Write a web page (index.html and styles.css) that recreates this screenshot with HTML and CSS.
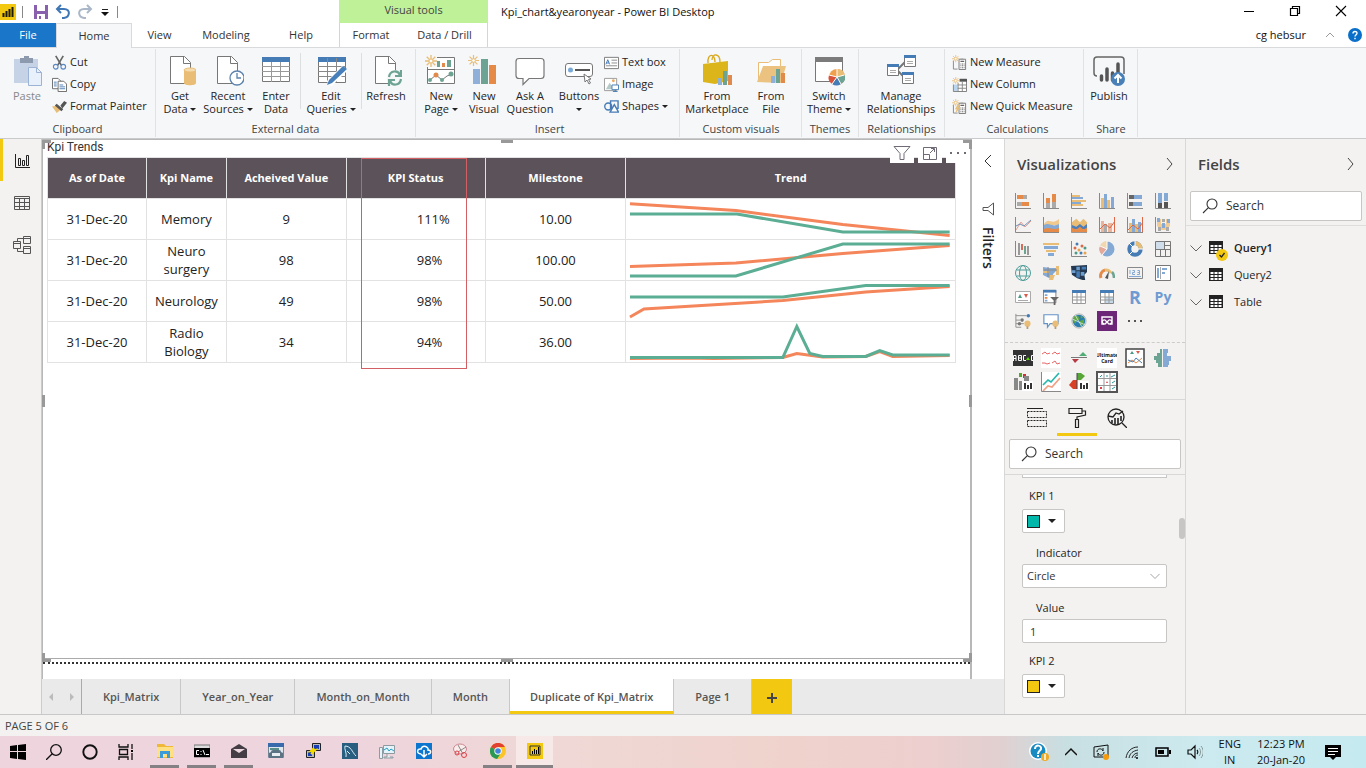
FILE: index.html
```html
<!DOCTYPE html>
<html lang="en">
<head>
<meta charset="utf-8">
<title>Kpi_chart&amp;yearonyear - Power BI Desktop</title>
<meta name="viewport" content="width=device-width, initial-scale=1">
<link rel="stylesheet" href="styles.css">
</head>
<body>
<svg class="defs" aria-hidden="true">
  <symbol id="search" viewBox="0 0 16 16"><g fill="none" stroke="#333" stroke-width="1.1"><circle cx="10" cy="6" r="5"/><path d="M6.4 9.6 1 15"/></g></symbol>
  <symbol id="down" viewBox="0 0 12 12"><path d="M.5 3.500 6 9l5.500-5.500" fill="none" stroke="#666"/></symbol>
  <symbol id="gridtable" viewBox="0 0 14 13"><path d="M0 0h14v13H0z" fill="#222"/><path d="M1.500 4h3v2h-3zM5.500 4h3v2h-3zM9.500 4h3v2h-3zM1.500 7h3v2h-3zM5.500 7h3v2h-3zM9.500 7h3v2h-3zM1.500 10h3v2h-3zM5.500 10h3v2h-3zM9.500 10h3v2h-3z" fill="#fff"/></symbol>
  <symbol id="page" viewBox="0 0 32 32"><path d="M3.500 2.500h14l6 6v21h-20z" fill="#fff" stroke="#777"/><path d="M16.500 2.500v7h7" fill="none" stroke="#777"/></symbol>
  <symbol id="burst" viewBox="0 0 12 12"><path d="M6 0v12M0 6h12M1.700 1.700l8.600 8.600M10.300 1.700l-8.600 8.600" stroke="#e9bd75" stroke-width="1.300"/><circle cx="6" cy="6" r="2" fill="#fff" stroke="#e9bd75"/></symbol>
  <symbol id="minibars" viewBox="0 0 14 14"><path d="M0 7h4v7H0z" fill="#8fb0d8"/><path d="M5 0h4v14H5z" fill="#6da392"/><path d="M10 4h4v10h-4z" fill="#e08a4c"/></symbol>
  <symbol id="calc" viewBox="0 0 16 16"><path d="M1.500 6v9H6M12 4.500H9" fill="none" stroke="#888"/><path d="M7.500 4.500h7v11h-7z" fill="#fff" stroke="#777"/><path d="M9 6h4v1.500H9zM9 9h1v1H9zM10.700 9h1v1h-1zM12.400 9h1v1h-1zM9 11h1v1H9zM10.700 11h1v1h-1zM12.400 11h1v1h-1zM9 13h1v1H9zM10.700 13h1v1h-1zM12.400 13h1v1h-1z" fill="#666"/></symbol>
</svg>

<header class="titlebar">
  <div class="quick">
    <svg class="logo" viewBox="0 0 16 16"><path d="M0 0h16v16H0z" fill="#f2c811"/><path d="M2.500 9h2v4h-2zM5.500 7h2v6h-2zM8.500 5h2v8h-2zM11.500 3h2v10h-2z" fill="#1d1a05"/></svg>
    <i class="bar"></i>
    <button aria-label="Save"><svg class="i16" viewBox="0 0 16 16"><path d="M1 1h14v14H1z" fill="#8960ad"/><path d="M4 1h8v6H4zM4 10h8v5H4z" fill="#fff"/><path d="M6 12h2v3H6z" fill="#8960ad"/></svg></button>
    <button aria-label="Undo"><svg class="i16" viewBox="0 0 16 16"><path d="M6 1 2 5l4 4M2 5h7c7 0 6 8 0 9H7" fill="none" stroke="#3f76b5" stroke-width="2"/></svg></button>
    <button aria-label="Redo"><svg class="i16" viewBox="0 0 16 16"><path d="m10 1 4 4-4 4M14 5H7C0 5 1 13 7 14h2" fill="none" stroke="#aab7c8" stroke-width="2"/></svg></button>
    <button aria-label="Customize"><svg class="i12" viewBox="0 0 12 12"><path d="M3 3.500h6" stroke="#222"/><path d="M2 6h8l-4 4z" fill="#111"/></svg></button>
    <i class="bar"></i>
  </div>
  <div class="tools">Visual tools</div>
  <h1 class="apptitle">Kpi_chart&amp;yearonyear - Power BI Desktop</h1>
  <div class="window">
    <button aria-label="Minimize"><svg class="i12" viewBox="0 0 12 12"><path d="M1 6.500h10" stroke="#000"/></svg></button>
    <button aria-label="Restore"><svg class="i12" viewBox="0 0 12 12"><path d="M1.500 3.500h7v7h-7zM3.500 3.500v-2h7v7h-2" fill="none" stroke="#000" stroke-width="1.200"/></svg></button>
    <button aria-label="Close"><svg class="i12" viewBox="0 0 12 12"><path d="m1 1 10 10M11 1 1 11" stroke="#000" stroke-width="1.100"/></svg></button>
  </div>
</header>

<nav class="menu">
  <button class="file">File</button>
  <button class="home">Home</button>
  <button class="view">View</button>
  <button class="modeling">Modeling</button>
  <button class="help">Help</button>
  <div class="context"><button class="format">Format</button><button class="drill">Data / Drill</button></div>
  <div class="account"><span>cg hebsur</span>
    <svg class="i12" viewBox="0 0 12 12"><path d="m2 8 4-4 4 4" fill="none" stroke="#999"/></svg>
    <svg class="i14" viewBox="0 0 14 14"><circle cx="7" cy="7" r="7" fill="#0a6fc9"/><path d="M5 5.400C5 2.800 9 2.900 9 5.200 9 6.600 7 6.800 7 8.600M7 9.800v1.400" fill="none" stroke="#fff" stroke-width="1.400"/></svg>
  </div>
</nav>

<section class="ribbon" aria-label="Home ribbon">
  <div class="group g-clip">
    <div class="items">
      <button class="big w54 off"><svg viewBox="0 0 32 32"><path d="M3 5h24v24H3z" fill="#c6d2e6"/><path d="M9 4h4V2h5v2h4v5H9z" fill="#8d99ad"/><path d="M17.500 13.500h8l5 5v13h-13z" fill="#e8f0fc" stroke="#9db3d5"/><path d="M25.500 13.500v5h5" fill="none" stroke="#9db3d5"/></svg><span>Paste</span></button>
      <div class="stack">
        <button><svg class="i16" viewBox="0 0 16 16"><path d="m4 1 6 10M12 1 6 11" stroke="#666" stroke-width="1.800"/><g fill="none" stroke="#5c88c2" stroke-width="1.200"><circle cx="4" cy="12.500" r="2.500"/><circle cx="12" cy="12.500" r="2.500"/></g></svg>Cut</button>
        <button><svg class="i16" viewBox="0 0 16 16"><g fill="#fff" stroke="#666"><path d="M.5 1.500h6l3 3v8h-9z"/><path d="M6.500 4.500h6l3 3v8h-9z"/></g><path d="M2 5.500h3M2 7.500h3M2 9.500h3M8 8.500h4M8 10.500h6M8 12.500h6" stroke="#4f7fb5"/></svg>Copy</button>
        <button><svg class="i16" viewBox="0 0 16 16"><path d="M0 8l6-1 4 4-5 4-2-3z" fill="#e9bd75"/><path d="m5 5 7 6-2 2-7-6zM9 7l4-5 3 2-5 6z" fill="#555"/></svg>Format Painter</button>
      </div>
    </div>
    <div class="caption">Clipboard</div>
  </div>
  <div class="group g-data">
    <div class="items">
      <button class="big w48"><svg viewBox="0 0 32 32"><use href="#page" x="3"/><path d="M20 16v13c0 3 12 3 12 0V16z" fill="#e9bd75"/><ellipse cx="26" cy="16" rx="6" ry="2" fill="#f4dcae" stroke="#e9bd75"/></svg><span>Get<br>Data <b></b></span></button>
      <button class="big w48"><svg viewBox="0 0 32 32"><use href="#page" x="2"/><circle cx="25" cy="24" r="7" fill="#fff" stroke="#5c82ab" stroke-width="1.300"/><path d="M25 19v5h4" fill="none" stroke="#5c82ab" stroke-width="1.300"/></svg><span>Recent<br>Sources <b></b></span></button>
      <button class="big w48"><svg viewBox="0 0 32 32"><path d="M2.500 3.500h27v24h-27z" fill="#fff" stroke="#777"/><path d="M2 3h28v5H2z" fill="#467cb5"/><path d="M2 12.500h28M2 17.500h28M2 22.500h28M11.500 8v20M20.500 8v20" stroke="#999"/></svg><span>Enter<br>Data</span></button>
      <i class="rule"></i>
      <button class="big w60"><svg viewBox="0 0 32 32"><path d="M3.500 3.500h27v25h-27z" fill="#fff" stroke="#777"/><path d="M3 3h28v5H3z" fill="#467cb5"/><path d="M3 12.500h28M3 17.500h28M3 22.500h28M12.500 4v24M21.500 4v24" stroke="#888"/><path d="M14 30 30 14" stroke="#fff" stroke-width="7"/><path d="m12 31 2-5 14-14 4 3-15 14z" fill="#477fba"/></svg><span>Edit<br>Queries <b></b></span></button>
      <i class="rule"></i>
      <button class="big w48"><svg viewBox="0 0 32 32"><use href="#page" x="2"/><circle cx="25" cy="24" r="8" fill="#f5f7f9"/><path d="M19 23c1-7 9-7 11-2M31 16v6h-6M31 25c-1 7-9 7-11 2M19 32v-6h6" fill="none" stroke="#6da392" stroke-width="2.200"/></svg><span>Refresh</span></button>
    </div>
    <div class="caption">External data</div>
  </div>
  <div class="group g-insert">
    <div class="items">
      <button class="big w42"><svg viewBox="0 0 32 32"><path d="M2.500 3.500h27v26h-27z" fill="#fff" stroke="#777"/><path d="M2 15.500h28" stroke="#777"/><path d="M12 7h3v6h-3zM22 6h4v7h-4z" fill="#6da392"/><path d="M17 9h3v4h-3z" fill="#e08a4c"/><path d="m5 26 6-5 6 5 5-4 5-2" fill="none" stroke="#777"/><circle cx="5" cy="26" r="2" fill="#6da392"/><circle cx="11" cy="21" r="2.500" fill="#e08a4c"/><circle cx="17" cy="26" r="2" fill="#6da392"/><circle cx="26" cy="20" r="2.500" fill="#6da392"/><path d="M0 0h12v13H0z" fill="#f5f7f9"/><use href="#burst" y="1" width="12" height="12"/></svg><span>New<br>Page <b></b></span></button>
      <button class="big w42"><svg viewBox="0 0 32 32"><path d="M5 15h7v15H5z" fill="#8fb0d8"/><path d="M13 5h7v25h-7z" fill="#6da392"/><path d="M21 11h7v19h-7z" fill="#e58a47"/><use href="#burst" y="1" width="11" height="11"/></svg><span>New<br>Visual</span></button>
      <button class="big w48"><svg viewBox="0 0 32 32"><path d="M5 4.500h22q3 0 3 3v14q0 3-3 3H15l-6 6v-6H5q-3 0-3-3v-14q0-3 3-3z" fill="#fff" stroke="#777" stroke-width="1.200"/></svg><span>Ask A<br>Question</span></button>
      <button class="big w48"><svg viewBox="0 0 32 32"><rect x="2.500" y="9.500" width="27" height="13" rx="2.500" fill="#fff" stroke="#777"/><circle cx="7.500" cy="16" r="2.500" fill="#78a9d8"/><path d="M12 16h15" stroke="#555" stroke-width="2"/><path d="m21 20 1 8 2-2 2 4 1.500-1-2-3.500 2.500-.5z" fill="#fff" stroke="#777"/></svg><span>Buttons<br><b></b></span></button>
      <div class="stack">
        <button><svg class="i16" viewBox="0 0 16 16"><path d="M.5 2.500h15v12H.5z" fill="#fff" stroke="#777"/><path d="m2 10 2-5 2 5M2.700 8.500h2.600" fill="none" stroke="#3f76b5"/><path d="M8 5.500h6M8 8.500h6M2 11.500h12" stroke="#888"/></svg>Text box</button>
        <button><svg class="i16" viewBox="0 0 16 16"><path d="M.5 1.500h13v13H.5z" fill="#fff" stroke="#999"/><path d="m2 13 4-7 5 7z" fill="#b5cac8"/><circle cx="10" cy="4" r="1.500" fill="#eea95d"/><path d="M8.500 8.500h7v5h-7zM12 13.500v2M9.500 15.500h5" fill="#fff" stroke="#467cb5"/></svg>Image</button>
        <button><svg class="i16" viewBox="0 0 16 16"><g fill="none" stroke="#467cb5" stroke-width="1.500"><path d="M7 2h8v8H7z"/><circle cx="4.500" cy="8" r="3.700"/><path d="m11 6 4.500 8h-9z" fill="#fff"/></g></svg>Shapes <b></b></button>
      </div>
    </div>
    <div class="caption">Insert</div>
  </div>
  <div class="group g-custom">
    <div class="items">
      <button class="big w72"><svg viewBox="0 0 32 32"><path d="M7 9C6-1 14-1 14 8M11 6c0-7 8-7 8 2" fill="none" stroke="#d8a91d" stroke-width="1.300"/><path d="m2 10 25-3v20l-13 3-12-2z" fill="#dcb51a"/><use href="#minibars" x="17" y="17" width="14" height="14"/></svg><span>From<br>Marketplace</span></button>
      <button class="big w36"><svg viewBox="0 0 32 32"><path d="M3.500 28V8.500h10l4-3h8v7" fill="#fff" stroke="#e9bd75"/><path d="M2 28 8 12h23l-5 17z" fill="#ebc27f"/><use href="#minibars" x="16" y="15" width="14" height="14"/></svg><span>From<br>File</span></button>
    </div>
    <div class="caption">Custom visuals</div>
  </div>
  <div class="group g-theme">
    <div class="items">
      <button class="big w54"><svg viewBox="0 0 32 32"><path d="M2.500 3.500h27v24h-27z" fill="#fff" stroke="#777"/><path d="M2 3h28v5H2z" fill="#7b7b7b"/><circle cx="24" cy="23" r="8" fill="#f0a04d"/><path d="M24 23V15a8 8 0 0 1 8 6z" fill="#e9bd75"/><path d="m24 23 8-2a8 8 0 0 1-4 9z" fill="#6da392"/><path d="m24 23 4 7a8 8 0 0 1-9 0z" fill="#467cb5"/><path d="m24 23-5 7a8 8 0 0 1-3-9z" fill="#d8533a"/><path d="M24 15v8l7.500-2M24 23l4 7M24 23l-5 7M24 23l-8-2" fill="none" stroke="#fff"/></svg><span>Switch<br>Theme <b></b></span></button>
    </div>
    <div class="caption">Themes</div>
  </div>
  <div class="group g-rel">
    <div class="items">
      <button class="big w84"><svg viewBox="0 0 32 32"><path d="m12 16 9-9M12 16l9 9" stroke="#777" stroke-width="2"/><g fill="#fff" stroke="#777"><path d="M2.500 10.500h11v11h-11zM19.500 1.500h11v11h-11zM17.500 18.500h11v11h-11z"/></g><path d="M2 10h12v3H2zM19 1h12v3H19zM17 18h12v3H17z" fill="#467cb5"/><path d="M5 16.500h6M5 18.500h6M22 7.500h6M22 9.500h6M20 24.500h6M20 26.500h6" stroke="#aaa"/></svg><span>Manage<br>Relationships</span></button>
    </div>
    <div class="caption">Relationships</div>
  </div>
  <div class="group g-calc">
    <div class="items">
      <div class="stack">
        <button><svg class="i16" viewBox="0 0 16 16"><use href="#calc"/><use href="#burst" width="8" height="8"/></svg>New Measure</button>
        <button><svg class="i16" viewBox="0 0 16 16"><path d="M1.500 8v7.500h14v-13h-7" fill="#fff" stroke="#777"/><path d="M8 2h8v3H8z" fill="#555"/><path d="M2 8h4v7H2z" fill="#b9d6ee"/><path d="M6 8.500h10M6 12h10M6.500 6v9M11 5v10" stroke="#888"/><use href="#burst" width="8" height="8"/></svg>New Column</button>
        <button><svg class="i16" viewBox="0 0 16 16"><use href="#calc"/><use href="#burst" width="8" height="8"/><path d="m6 6-3 5h2l-2 5 6-7H6l3-3z" fill="#e9bd75"/></svg>New Quick Measure</button>
      </div>
    </div>
    <div class="caption">Calculations</div>
  </div>
  <div class="group g-share">
    <div class="items">
      <button class="big w48"><svg viewBox="0 0 32 32"><path d="M4 22Q1 22 1 19V6q0-3 3-3h24q3 0 3 3v14" fill="none" stroke="#666" stroke-width="1.500"/><path d="M8.500 26v-4M14 26V15M19.500 26v-7M25 26V10" stroke="#555" stroke-width="3.500" stroke-linecap="round"/><circle cx="25" cy="25" r="7" fill="#4a80b8"/><path d="M25 29v-8m-3.500 3.500L25 21l3.500 3.500" fill="none" stroke="#fff" stroke-width="2"/></svg><span>Publish</span></button>
    </div>
    <div class="caption">Share</div>
  </div>
</section>

<main class="workspace">
  <nav class="rail">
    <button class="current" aria-label="Report"><svg class="i16" viewBox="0 0 16 16"><path d="M1.500 1v13.500H16M4.500 5.500h2v7h-2zM8.500 7.500h2v5h-2zM12.500 2.500h2v10h-2z" fill="none" stroke="#222"/></svg></button>
    <button aria-label="Data"><svg class="i16" viewBox="0 0 16 16"><path d="M.5 1.500h15v13H.5zM.5 3.500h15M.5 7.500h15M.5 11.500h15M5.500 3.500v11M10.500 3.500v11" fill="none" stroke="#555"/></svg></button>
    <button aria-label="Model"><svg class="i18" viewBox="0 0 18 18"><path d="M.5 5.500h7v7h-7zM.5 7.500h7M10.500.5h7v7h-7zM10.500 2.500h7M10.500 10.500h7v7h-7zM10.500 12.500h7M4.500 5V2.500h6M4.500 13v2.500h6" fill="none" stroke="#555"/></svg></button>
  </nav>

  <div class="center">
    <div class="report">
      <section class="canvas">
        <h2>Kpi Trends</h2>
        <table class="kpi">
          <colgroup><col class="c1"><col class="c2"><col class="c3"><col class="c4"><col class="c5"><col></colgroup>
          <thead><tr><th>As of Date</th><th>Kpi Name</th><th>Acheived Value</th><th>KPI Status</th><th>Milestone</th><th>Trend</th></tr></thead>
          <tbody>
            <tr><td>31-Dec-20</td><td>Memory</td><td>9</td><td class="status">111%</td><td>10.00</td><td class="trend"><svg viewBox="627 198 329 40" preserveAspectRatio="none"><path class="orange" d="M631 202.700 737 209.500 844 223.500 951 234.500"/><path class="green" d="M631 213H738L844 231H951"/></svg></td></tr>
            <tr><td>31-Dec-20</td><td>Neuro surgery</td><td>98</td><td class="status">98%</td><td>100.00</td><td class="trend"><svg viewBox="627 240 329 40" preserveAspectRatio="none"><path class="orange" d="M631 266.500 737 263 844 253.500 951 245.500"/><path class="green" d="M631 276H737L844 244H951"/></svg></td></tr>
            <tr><td>31-Dec-20</td><td>Neurology</td><td>49</td><td class="status">98%</td><td>50.00</td><td class="trend"><svg viewBox="627 281 329 40" preserveAspectRatio="none"><path class="orange" d="m631 317 14-8 139-8.500 83-8.500 84-5.500"/><path class="green" d="M631 297H784L867 285.500H951"/></svg></td></tr>
            <tr><td>31-Dec-20</td><td>Radio Biology</td><td>34</td><td class="status">94%</td><td>36.00</td><td class="trend"><svg viewBox="627 322 329 40" preserveAspectRatio="none"><path class="orange" d="M631 358.500 690 358 715 358.500 784 357.500 798 353.500 824 357 867 356.500 881 351.500 894 356.500 951 355.500"/><path class="green" d="M631 357.500H784L798 326.500 811 353.500 824 356.500H867L881 350.500 894 355H951"/></svg></td></tr>
          </tbody>
        </table>
        <div class="highlight"></div>
        <div class="visualbar">
          <button aria-label="Filter"><svg class="i18" viewBox="0 0 18 18"><path d="M1 2.500h16l-6 7v6H7v-6z" fill="none" stroke="#706a76"/></svg></button>
          <button aria-label="Focus mode"><svg class="i18" viewBox="0 0 18 18"><path d="M2.500 3.500h13v12h-13zM2.500 10.500h6v5M9 9l4-4M10 4.500h3.500V8" fill="none" stroke="#706a76"/></svg></button>
          <button aria-label="More options"><svg class="i18" viewBox="0 0 18 18"><path d="M1 8h2v2H1zM8 8h2v2H8zM15 8h2v2h-2z" fill="#706a76"/></svg></button>
        </div>
        <i class="handle nw"></i><i class="handle n"></i><i class="handle ne"></i><i class="handle w"></i><i class="handle e"></i><i class="handle sw"></i><i class="handle s"></i><i class="handle se"></i>
      </section>
      <aside class="filters">
        <svg class="i16" viewBox="0 0 16 16"><path d="M11 2 5 8l6 6" fill="none" stroke="#333"/></svg>
        <svg class="i16 funnel" viewBox="0 0 16 16"><path d="M13.500 2v12L8 9.500H3v-3h5z" fill="none" stroke="#555"/></svg>
        <h2>Filters</h2>
      </aside>
    </div>
    <nav class="pages">
      <div class="arrows"><svg class="i12" viewBox="0 0 12 12"><path d="M8 2v8L4 6z" fill="#bbb"/></svg><svg class="i12" viewBox="0 0 12 12"><path d="M4 2v8l4-4z" fill="#bbb"/></svg></div>
      <button>Kpi_Matrix</button><button>Year_on_Year</button><button>Month_on_Month</button><button>Month</button><button class="current">Duplicate of Kpi_Matrix</button><button>Page 1</button><button class="add" aria-label="New page"><svg class="i12" viewBox="0 0 12 12"><path d="M6 1v10M1 6h10" stroke="#444" stroke-width="2"/></svg></button>
    </nav>
  </div>

  <aside class="pane viz">
    <header><h2>Visualizations</h2><svg class="i12" viewBox="0 0 12 12"><path d="m4 0 5 6-5 6" fill="none" stroke="#444"/></svg></header>
    <div class="gallery">
      <svg viewBox="0 0 16 16"><path d="M2 2h6v4H2z" fill="#e58a47"/><path d="M8 2h4v4H8z" fill="#aaa"/><path d="M7 9h7v4H7z" fill="#e58a47"/><path d="M2 9h5v4H2z" fill="#aaa"/><path class="ax" d="M.5 0v15.500H16"/></svg>
      <svg viewBox="0 0 16 16"><path d="M3 5h4v5H3zM9 1h4v8H9z" fill="#e58a47"/><path d="M3 10h4v5H3zM9 9h4v6H9z" fill="#aaa"/><path class="ax" d="M.5 0v15.500H16"/></svg>
      <svg viewBox="0 0 16 16"><path d="M1 2h8v2H1zM1 7h14v2H1zM1 11h11v2H1z" fill="#e9bd75"/><path d="M1 4h11v2H1zM1 9h9v2H1z" fill="#84a9d5"/><path class="ax" d="M.5 0v15.500H16"/></svg>
      <svg viewBox="0 0 16 16"><path d="M2 5h3v10H2zM8 7h3v8H8z" fill="#e9bd75"/><path d="M5 1h3v14H5zM12 4h3v11h-3z" fill="#84a9d5"/><path class="ax" d="M.5 0v15.500H16"/></svg>
      <svg viewBox="0 0 16 16"><path d="M2 2h5v4H2zM2 9h4v4H2z" fill="#666"/><path d="M7 2h8v4H7zM6 9h9v4H6z" fill="#84a9d5"/><path class="ax" d="M.5 0v15.500H16"/></svg>
      <svg viewBox="0 0 16 16"><path d="M3 0h4v10H3zM9 0h4v8H9z" fill="#84a9d5"/><path d="M3 10h4v5H3zM9 9h4v6H9z" fill="#555"/><path class="ax" d="M.5 0v15.500H16"/></svg>

      <svg viewBox="0 0 16 16"><path d="m1 13 5-8 4 5 6-6" fill="none" stroke="#e5a090"/><path d="m1 9 4-2 4 2 7-6" fill="none" stroke="#708db5"/><path class="ax" d="M.5 0v15.500H16"/></svg>
      <svg viewBox="0 0 16 16"><path d="M1 7c5-8 7 2 15-5v6H1z" fill="#f0c98f"/><path d="M1 8c6-3 8 3 15-1v5H1z" fill="#84a9d5"/><path d="M1 12c6-3 8 2 15-1v4H1z" fill="#e58a47"/><path class="ax" d="M.5 0v15.500H16"/></svg>
      <svg viewBox="0 0 18 18"><path d="m1 6 5-4 4 4 4-4 4 4v5H1z" fill="#e9bd75"/><path d="m1 9 5 2 4-3 4 3 4-3v6H1z" fill="#4e7eb5"/><path d="m1 12 5 2 4-3 4 3 4-2v5H1z" fill="#e58a47"/><path class="ax" d="M.5 0v17.500H18"/></svg>
      <svg viewBox="0 0 16 16"><path d="M2 4h3v11H2zM9 6h4v9H9z" fill="#e9b49a"/><path d="M5 7h3v8H5z" fill="#aaa"/><path d="m1 12 5-5 5 4 5-7" fill="none" stroke="#dc6847"/><path class="ax" d="M.5 0v15.500H16"/><path d="M15.500 0v15" stroke="#dc6847"/></svg>
      <svg viewBox="0 0 16 16"><path d="M5 2h3v13H5zM11 5h3v10h-3z" fill="#84a9d5"/><path d="M2 6h3v9H2zM8 7h3v8H8z" fill="#e9bd75"/><path d="m1 13 5-5 5 4 5-7" fill="none" stroke="#dc6847"/><path class="ax" d="M.5 0v15.500H16"/><path d="M15.500 0v15" stroke="#dc6847"/></svg>
      <svg viewBox="0 0 16 16"><path d="M2 2h4v5h5V2h4v7l-4 4H6L2 9z" fill="#f1cb94"/><path d="M2 1h3v4H2zM7 6h3v5H7zM12 2h3v4h-3z" fill="#84a9d5"/><path d="M7 2h3v3H7zM3 10h3v4H3zM11 10h3v4h-3z" fill="#aaa"/><path class="ax" d="M.5 0v15.500H16"/></svg>

      <svg viewBox="0 0 16 16"><path d="M3 2h2v12H3zM12 5h2v9h-2z" fill="#999"/><path d="M6 3h2v6H6z" fill="#d96c59"/><path d="M9 5h2v8H9z" fill="#6da392"/><path class="ax" d="M.5 0v15.500H16"/></svg>
      <svg viewBox="0 0 16 16"><path d="M0 2h16v2H0zM3 9h10v2H3z" fill="#e9bd75"/><path d="M1 5h14v3H1zM5 12h6v3H5z" fill="#84a9d5"/></svg>
      <svg viewBox="0 0 16 16"><g fill="#dc6847"><circle cx="4" cy="7" r="1.500"/><circle cx="11" cy="5" r="1.500"/></g><g fill="#e5a34e"><circle cx="8" cy="9" r="1.500"/><circle cx="14" cy="12" r="1.500"/></g><g fill="#4a9a86"><circle cx="5" cy="12" r="1.500"/><circle cx="14" cy="7" r="1.500"/></g><g fill="#467cb5"><circle cx="10" cy="12" r="1.500"/><circle cx="6" cy="3" r="1.500"/></g><path class="ax" d="M.5 0v15.500H16"/></svg>
      <svg viewBox="0 0 16 16"><circle cx="8" cy="8" r="7.500" fill="#84a9d5"/><path d="M8 8V0A8 8 0 0 0 1 5z" fill="#f0d7ac"/><path d="M8 8 1 5a8 8 0 0 0 2 9z" fill="#e5a99a"/><path d="M8 0v8L1 5M8 8l-5 6" stroke="#fff" fill="none"/></svg>
      <svg viewBox="0 0 16 16"><circle cx="8" cy="8" r="5.700" fill="none" stroke="#467cb5" stroke-width="4"/><path d="M8 2.300A5.700 5.700 0 0 1 13.700 8" fill="none" stroke="#e9bd75" stroke-width="4"/><path d="m8 0v5M16 8h-5M2 2l4 4M2 14l4-4" stroke="#fff"/></svg>
      <svg viewBox="0 0 16 16"><path d="M1 1h9v7H1z" fill="#d0ddeb"/><path d="M.5.5h15v15H.5zM.5 8.500h15M9.500.5v8M9.500 4.500h6M5.500 8.500v7M10.500 8.500v7" fill="none" stroke="#777"/></svg>

      <svg viewBox="0 0 16 16"><g fill="none" stroke="#4e9d99"><circle cx="8" cy="8" r="7.500"/><ellipse cx="8" cy="8" rx="3.500" ry="7.500"/><path d="M1.500 5h13M1.500 11h13"/></g></svg>
      <svg viewBox="0 0 16 16"><path d="m0 2 7 1 6 0v3l-3 3v4H6L0 10z" fill="#84a9d5"/><path d="M0 6h6v2H0zM7 10h5l-2 5H6zM13 1h3v9h-3z" fill="#e9bd75"/><path d="M1 5h13M5 2v10" stroke="#888"/></svg>
      <svg viewBox="0 0 18 18"><path d="m0 1 18-1v8l-3 3 1 6h-3l-6-2-6-4z" fill="#243951"/><path d="M6 2h4v4H6zM1 6h4v3H1zM11 8h4v4h-4z" fill="#6c9dce"/><path d="M6 7h4v7H6zM12 2h5v3h-5z" fill="#467cb5"/></svg>
      <svg viewBox="0 0 16 16"><path d="M2 13a6 6 0 0 1 4-8" fill="none" stroke="#e58a47" stroke-width="3"/><path d="M6 5a6 6 0 0 1 6 3" fill="none" stroke="#e9bd75" stroke-width="3"/><path d="M13 7c2 2 2 4 2 6" fill="none" stroke="#6da392" stroke-width="2.500"/><path d="m6 13 4-7-1 8z" fill="#555"/></svg>
      <svg viewBox="0 0 16 16"><path d="M.5 2.500h15v11H.5z" fill="none" stroke="#888"/><path d="M3 5v4M5.500 5.500h2v2h-2v2h2.500M10.500 5.500h2v4h-2.500M10.500 7.500h2M2 11.500h12" fill="none" stroke="#84a9d5"/></svg>
      <svg viewBox="0 0 16 16"><path d="M.5.5h15v15H.5z" fill="#fff" stroke="#777"/><path d="M2 3h2v10H2zM7 3h5v2H7zM7 7h3v2H7z" fill="#84a9d5"/><path d="M5.500 2v12" stroke="#aaa"/></svg>

      <svg viewBox="0 0 16 16"><path d="M.5 2.500h15v11H.5z" fill="#fff" stroke="#aaa"/><path d="m3 9 2-4 2 4z" fill="#4a9a86"/><path d="M9 5h4l-2 4z" fill="#d65b4c"/><path d="M3 11.500h10" stroke="#aaa"/></svg>
      <svg viewBox="0 0 18 18"><path d="M.5 1.500h14v14H.5z" fill="#fff" stroke="#777"/><path d="M0 1h15v3H0z" fill="#467cb5"/><path d="M2 6h3v2H2zM2 12h3v2H2z" fill="#84a9d5"/><path d="M2 9h3v2H2z" fill="#e58a47"/><path d="M8 9h10l-4 4v5h-2v-5z" fill="#666"/></svg>
      <svg viewBox="0 0 16 16"><path d="M1.500 1.500h13v13h-13zM1.500 8h13M1.500 11h13M6 4v11M10 4v11" fill="#fff" stroke="#999"/><path d="M1 1h14v3H1z" fill="#467cb5"/></svg>
      <svg viewBox="0 0 16 16"><path d="M1.500 1.500h13v13h-13z" fill="#fff" stroke="#888"/><path d="M6 8h8v6H6z" fill="#c6dae9"/><path d="M1 8h14M1 11h14M6 4v11M10 4v11" stroke="#999"/><path d="M1 1h14v3H1z" fill="#467cb5"/></svg>
      <b class="letter r">R</b><b class="letter">Py</b>

      <svg viewBox="0 0 18 18"><path d="M1 1v15h6M1 3h12M1 8h5M1 12h9" fill="none" stroke="#888"/><circle cx="8" cy="8" r="2" fill="#777"/><circle cx="5" cy="12" r="2" fill="#777"/><circle cx="15" cy="3" r="2" fill="#467cb5"/><circle cx="14" cy="12" r="3.500" fill="#e9bd75"/><path d="M13 15h2v3h-2z" fill="#b59b70"/></svg>
      <svg viewBox="0 0 18 18"><path d="M1 2h16v10H8l-3 4v-4H1z" fill="#fff" stroke="#6392c6" stroke-width="1.300"/><circle cx="14" cy="12" r="3.500" fill="#e9bd75"/><path d="M13 15h2v3h-2z" fill="#b59b70"/></svg>
      <svg viewBox="0 0 18 18"><circle cx="9" cy="9" r="8" fill="#e9f2ee" stroke="#aaa"/><circle cx="9" cy="9" r="7" fill="#2a7dad"/><path d="m3 4 5-1 2 4-4 2-1 3-3-3zM10 9l5-2-1 5-3 3zM11 3l3 2-3 1z" fill="#60a746"/><path d="m2 7 13 6M5 3l7 12" stroke="#fff" stroke-width=".7"/></svg>
      <svg class="large" viewBox="0 0 20 20"><path d="M0 0h20v20H0z" fill="#6d2677"/><path d="M7 13H5V6h10v7h-2" fill="none" stroke="#fff" stroke-width="1.400"/><path d="m10 11 2-2c3-1 4 4 0 4l-4-4c-3-1-4 4 0 4z" fill="none" stroke="#fff" stroke-width="1.300"/></svg>
      <svg viewBox="0 0 16 16"><path d="M1 7h2v2H1zM7 7h2v2H7zM13 7h2v2h-2z" fill="#555"/></svg>
    </div>
    <div class="gallery custom">
      <svg class="large" viewBox="0 0 20 20"><path d="M0 2h20v16H0z" fill="#333"/><path d="M.5 13V7.500H3V13M0 10.500h3M5.500 7.500h3v5h-3zM5.500 10h3M13 7.500h-2.500v5H13M20 7.500h-1.500v5H20" fill="none" stroke="#fff"/><path d="m13 12 2-3 2 3z" fill="#5bd400"/></svg>
      <svg class="large" viewBox="0 0 20 20"><path d="M0 0h20v20H0z" fill="#fff"/><path d="m1 6 3-2 2 2 3-1M11 6l3-2 2 2 3-1M1 15l3 0 2 1 3-1M11 15l3-2 2 3 3-1" fill="none" stroke="#e46666"/></svg>
      <svg viewBox="0 0 16 16"><path d="m8 6 4-4 4 4z" fill="#51ad74"/><path d="M1 9h7l-4 4z" fill="#b73945"/><path d="M0 7.500h16" stroke="#777"/></svg>
      <svg class="large" viewBox="0 0 20 20"><path d="M0 0h20v20H0z" fill="#fff"/><text x="10" y="9" text-anchor="middle">Ultimate</text><text x="10" y="15" text-anchor="middle">Card</text></svg>
      <svg class="large" viewBox="0 0 20 20"><path d="M1 1h18v18H1z" fill="#fff" stroke="#444" stroke-width="1.500"/><path d="m5 6 2-3 2 3z" fill="#4a9a86"/><path d="M11 3h4l-2 3z" fill="#d65b4c"/><path d="m3 15 4-3 4 3 6-5" fill="none" stroke="#e58a47"/><path d="m3 12 5 2 3-4 6 5" fill="none" stroke="#467cb5"/></svg>
      <svg class="large" viewBox="0 0 20 20"><path d="M7 1h2v18H5v-4H3v-3H1V8h3V5h3z" fill="#6da392"/><path d="M10 1h5v4h-1v3h4v5h-2v4h-1v2h-5z" fill="#84a9d5"/></svg>
      <svg class="large" viewBox="0 0 20 20"><path d="M1 6h4v12H1zM6 9h4v9H6z" fill="#888"/><path d="M6 1h3v4H6z" fill="#55a82b"/><path d="M10 2h3v4h-3z" fill="#d13131"/><path d="M11 4h5v5h-5z" fill="#888"/><path d="M9 9h11v10H9z" fill="#fff"/><path d="M11 11h2v6h-2zM14 13h2v4h-2zM17 11h2v6h-2z" fill="#333"/></svg>
      <svg class="large" viewBox="0 0 20 20"><path d="M0 0h20v20H0z" fill="#fff"/><path d="m2 13 5-5 3 2 8-9" fill="none" stroke="#26b7ad" stroke-width="1.700"/><path d="m2 19 5-5 4 1 8-9" fill="none" stroke="#f0a083" stroke-width="1.700"/><path class="ax" d="M.5 0v19.500H20"/></svg>
      <svg class="large" viewBox="0 0 20 20"><path d="M8 1h4l4 3-4 4H8z" fill="#58a637"/><path d="M8 8v9H4l-4-4 4-5z" fill="#d94126"/><path d="M8 1v16" stroke="#444"/><path d="M9 9h11v10H9z" fill="#fff"/><path d="M11 11h2v6h-2zM14 13h2v4h-2zM17 11h2v6h-2z" fill="#333"/></svg>
      <svg class="huge" viewBox="0 0 22 22"><path d="M1 1h20v20H1z" fill="#fff" stroke="#555" stroke-width="2"/><path d="M2 7.500h18M2 14.500h18M8 2v18M14 2v18" stroke="#999"/><path d="m10 12 1-2 1 2zM4 18h2v-2H4z" fill="#df3c48"/><path d="m16 12 3-2M15 6l4-2M16 18l3-2M4 6l2-2M10 5h2" stroke="#289b9b"/></svg>
    </div>
    <div class="modes">
      <button aria-label="Fields"><svg class="i20" viewBox="0 0 20 20"><path d="M0 .500h16" stroke="#222"/><path d="M.5 3.500h19v6H.5zM.5 12.500h19v6H.5z" fill="none" stroke="#222" stroke-dasharray="2 1"/></svg></button>
      <button class="current" aria-label="Format"><svg class="i20" viewBox="0 0 20 20"><path d="M2 .500h13v5H2zM15 3h3.500v4L10 9v3M8.500 11.500h3v8h-3z" fill="none" stroke="#222" stroke-width="1.200"/></svg></button>
      <button aria-label="Analytics"><svg class="i20" viewBox="0 0 20 20"><circle cx="9" cy="9" r="8" fill="none" stroke="#222" stroke-width="1.300"/><path d="m1 8 5 1 3-4 3 1 4-3M15 15l5 5" fill="none" stroke="#222" stroke-width="1.300"/><path d="M5 12v3M8 10v6M11 10v6M14 8v5" stroke="#222" stroke-width="1.600"/></svg></button>
    </div>
    <label class="search"><svg class="i16"><use href="#search"/></svg><input type="text" placeholder="Search" aria-label="Search formatting"></label>
    <div class="properties">
      <div class="cut"></div>
      <span class="label">KPI 1</span>
      <button class="swatch" aria-label="KPI 1 color"><i class="teal"></i><b></b></button>
      <label class="label inset" for="indicator">Indicator</label>
      <div class="choice"><select id="indicator"><option>Circle</option></select><svg><use href="#down"/></svg></div>
      <label class="label inset" for="value">Value</label>
      <input class="value" id="value" type="text" value="1">
      <span class="label">KPI 2</span>
      <button class="swatch" aria-label="KPI 2 color"><i class="gold"></i><b></b></button>
      <i class="thumb"></i>
    </div>
  </aside>

  <aside class="pane fields">
    <header><h2>Fields</h2><svg class="i12" viewBox="0 0 12 12"><path d="m4 0 5 6-5 6" fill="none" stroke="#444"/></svg></header>
    <label class="search"><svg class="i16"><use href="#search"/></svg><input type="text" placeholder="Search" aria-label="Search fields"></label>
    <ul>
      <li class="picked"><svg class="i12"><use href="#down"/></svg><svg class="sheet" viewBox="0 0 14 13"><use href="#gridtable"/></svg>Query1<svg class="tick" viewBox="0 0 12 12"><circle cx="6" cy="6" r="6" fill="#f2c811"/><path d="m3.500 6 2 2 3-4" fill="none" stroke="#222" stroke-width="1.300"/></svg></li>
      <li><svg class="i12"><use href="#down"/></svg><svg class="sheet" viewBox="0 0 14 13"><use href="#gridtable"/></svg>Query2</li>
      <li><svg class="i12"><use href="#down"/></svg><svg class="sheet" viewBox="0 0 14 13"><use href="#gridtable"/></svg>Table</li>
    </ul>
  </aside>
</main>

<footer class="statusline">PAGE 5 OF 6</footer>

<footer class="taskbar">
  <div class="system">
    <button aria-label="Start"><svg viewBox="0 0 16 16"><path d="m0 2 7-1v6H0zM8 1l8-1v7H8zM0 8h7v7l-7-1zM8 8h8v8l-8-1z" fill="#000"/></svg></button>
    <button aria-label="Search"><svg viewBox="0 0 16 16"><path d="M6.500 9.500 0 16" stroke="#111" stroke-width="1.300"/><circle cx="10" cy="6" r="5.300" fill="none" stroke="#111" stroke-width="1.300"/></svg></button>
    <button aria-label="Cortana"><svg viewBox="0 0 16 16"><circle cx="8" cy="8" r="6.700" fill="none" stroke="#111" stroke-width="1.900"/></svg></button>
    <button aria-label="Task view"><svg viewBox="0 0 16 16"><path d="M1 0v3h9V0M1.500 5.500h8v5h-8zM1 16v-3h9v3M14 0v5M14 9v7" fill="none" stroke="#111" stroke-width="1.300"/><path d="M13 6h2v2h-2z"/></svg></button>
  </div>
  <div class="apps">
    <button class="open" aria-label="Files"><svg viewBox="0 0 16 16"><path d="M0 1h7l2 2h7v12H0z" fill="#efb839"/><path d="M0 4h16v10H0z" fill="#ffe082"/><path d="M3 15V8h10v7h-3v-4H6v4z" fill="#3b9bd8"/></svg></button>
    <button class="open" aria-label="Command prompt"><svg viewBox="0 0 16 16"><path d="M0 2h16v12H0z" fill="#ddd" stroke="#777"/><path d="M0 5h16v9H0z"/><path d="M5 7.500H2.500v4H5M7 8v1M7 11v1M9 7l2 5M12 11.500h3" fill="none" stroke="#fff"/></svg></button>
    <button class="open" aria-label="Mail"><svg viewBox="0 0 16 16"><path d="m0 6 8-5 8 5v9H0z" fill="#443d43"/><path d="M2 6h12l-6 4z" fill="#eed8e0"/></svg></button>
    <button aria-label="Printer"><svg viewBox="0 0 16 16"><path d="M.5.500h15v14H.5z" fill="#dfe7ee" stroke="#718596"/><path d="M0 0h16v4H0z" fill="#396aab"/><path d="M2 5h9v2H2z" fill="#588d89"/><path d="M3 9q0-2 2-2h6q2 0 2 2l2 1v5H1v-5z" fill="#5d7484"/><path d="M4 10h8v3H4z" fill="#e8eef2"/></svg></button>
    <button aria-label="Terminal"><svg viewBox="0 0 16 16"><path d="M7.500.500h8v7h-8zM1.500 7.500h8v7h-8z" fill="#bbb" stroke="#222"/><path d="M9 2h5v4H9zM3 9h4v4H3z" fill="#183db5"/><path d="m9 5-3 3 4-1-4 4" fill="none" stroke="#f5da00" stroke-width="2"/></svg></button>
    <button aria-label="MySQL"><svg viewBox="0 0 16 16"><path d="M0 0h16v16H0z" fill="#285e80"/><path d="M4 14C5 10 2 6 3 3c6 0 7 6 11 10M5 8l3 3" fill="none" stroke="#d9edf5"/></svg></button>
    <button aria-label="Monitor"><svg viewBox="0 0 16 16"><path d="M4.500 2.500h11v8h-11zM.5 4.500h3v11h-3zM8 11v3H5v1h9v-1h-3" fill="#e5f3fb" stroke="#8d9aa1"/><path d="m5 7 3-2 2 3 2-2 3 2" fill="none" stroke="#21a0c4"/></svg></button>
    <button aria-label="Cloud"><svg viewBox="0 0 16 16"><path d="M0 0h16v16H0z" fill="#0c75cd"/><path d="M5 11c-5 0-4-6 0-5 2-5 8-2 7 1 4 0 3 4 0 4M8 7v7m-3-3 3 3 3-3" fill="none" stroke="#fff" stroke-width="1.500"/></svg></button>
    <button aria-label="Snipping tool"><svg viewBox="0 0 16 16"><ellipse cx="7" cy="6" rx="6.500" ry="5" fill="#f9eceb" stroke="#ce8590"/><path d="m5 2 5 9M13 4 5 9" stroke="#888"/><circle cx="4" cy="10" r="2" fill="none" stroke="#df3d45"/><circle cx="11" cy="12" r="2.500" fill="none" stroke="#df3d45"/></svg></button>
    <button class="open" aria-label="Chrome"><svg viewBox="0 0 16 16"><circle cx="8" cy="8" r="8" fill="#fbc529"/><path d="M8 8 1 4a8 8 0 0 1 14 0H8z" fill="#e24131"/><path d="M8 8 1 4a8 8 0 0 0 6 12l4-6z" fill="#299955"/><circle cx="8" cy="8" r="3.700" fill="#fff"/><circle cx="8" cy="8" r="2.800" fill="#4283dd"/></svg></button>
    <button class="open active" aria-label="Power BI"><svg viewBox="0 0 16 16"><path d="M0 0h16v16H0z" fill="#f2c811"/><path d="M3 3h10v9H3z" fill="none" stroke="#333"/><path d="M5 8h1v3H5zM7 6h1v5H7zM9 7h1v4H9zM11 4h1v7h-1z"/></svg></button>
  </div>
  <div class="tray">
    <svg class="i20" viewBox="0 0 20 20"><circle cx="9" cy="9" r="9" fill="#fff"/><circle cx="9" cy="9" r="7.500" fill="#168ac1"/><path d="M6 7c0-5 7-4 6 0-1 2-3 2-3 5M9 13v2" fill="none" stroke="#fff" stroke-width="2"/><circle cx="16" cy="15" r="4" fill="#efab25"/><path d="M16 12v6" stroke="#fff" stroke-width="1.500"/></svg>
    <svg class="i12" viewBox="0 0 12 12"><path d="m0 9 6-6 6 6" fill="none" stroke="#111" stroke-width="1.500"/></svg>
    <svg class="i16" viewBox="0 0 16 16"><path d="m1 3 14-2v12H1z" fill="none" stroke="#111"/><path d="M4 8c0-4 5-4 6-1V4M11 8c0 4-5 4-6 1v3" fill="none" stroke="#111"/><circle cx="13" cy="13" r="3" fill="#f69a0b"/></svg>
    <svg class="i14" viewBox="0 0 14 14"><path d="M1 13C2 6 7 2 13 2M4 13c1-5 4-7 9-8M7 13c1-3 3-5 6-5M10 13c0-2 1-3 3-3" fill="none" stroke="#222"/><circle cx="12" cy="13" r="1"/></svg>
    <svg class="i16" viewBox="0 0 16 16"><path d="M1 4h12v8H1z" fill="none" stroke="#000" stroke-width="1.500"/><path d="M3 6h6v4H3zM14 6h2v4h-2z"/></svg>
    <svg class="i16" viewBox="0 0 16 16"><path d="M1 6h3l4-4v12l-4-4H1zM10 6c1 1 1 3 0 4" fill="none" stroke="#111" stroke-width="1.200"/><path d="M12 4c2 2 2 6 0 8M14 2c3 4 3 8 0 12" fill="none" stroke="#899"/></svg>
    <span class="lang">ENG<br>IN</span>
    <time>12:23 PM<br>20-Jan-20</time>
    <svg class="i16" viewBox="0 0 16 16"><path d="M0 1h16v12h-5l-3 3-3-3H0z"/><path d="M3 4.500h10M3 7.500h10M3 10.500h7" stroke="#fff"/></svg>
  </div>
</footer>
</body>
</html>
```

FILE: styles.css
```css
* { box-sizing: border-box; }
body { margin: 0; min-height: 100vh; display: flex; flex-direction: column; font: 11px/14px "Open Sans", "Noto Sans", sans-serif; color: #252423; background: #f3f2f1; }
button { font: inherit; color: inherit; background: none; border: 0; padding: 0; }
h1, h2, ul { margin: 0; padding: 0; font-size: inherit; font-weight: 400; list-style: none; }
svg { display: block; flex: none; }
.defs { display: none; }
.i12 { width: 12px; height: 12px; }
.i14 { width: 14px; height: 14px; }
.i16 { width: 16px; height: 16px; }
.i18 { width: 18px; height: 18px; }
.i20 { width: 20px; height: 20px; }
button b { display: inline-block; border: 3px solid transparent; border-top-color: #222; border-bottom: 0; vertical-align: 2px; }

.titlebar { display: flex; height: 23px; background: #fff; }
.quick { width: 339px; display: flex; align-items: center; gap: 6px; }
.logo { width: 16px; height: 16px; }
.bar { width: 1px; height: 12px; background: #888; margin-right: 4px; }
.bar:last-child { margin: 0; }
.tools { width: 149px; background: #bff199; text-align: center; line-height: 20px; color: #444; }
.apptitle { flex: 1; padding-left: 13px; line-height: 24px; color: #111; }
.window { display: flex; align-items: center; gap: 34px; padding: 0 19px 2px 0; }

.menu { display: flex; height: 25px; background: #fff; border-bottom: 1px solid #d8dadc; color: #333; }
.file { width: 56px; background: #1976c9; color: #fff; }
.home { width: 76px; height: 25px; background: #f5f7f9; border: 1px solid #d8dadc; border-bottom: 0; }
.view { width: 55px; }
.modeling { width: 78px; }
.help { width: 72px; }
.context { display: flex; border: solid #d5d5d5; border-width: 0 1px; margin-left: 2px; }
.format { width: 62px; }
.drill { width: 85px; }
.account { display: flex; align-items: center; gap: 12px; margin-left: auto; padding-right: 4px; color: #111; }
.account span { margin-right: 6px; }

.ribbon { display: flex; height: 91px; background: #f5f7f9; border-bottom: 1px solid #c9cacc; }
.group { border-right: 1px solid #e0e2e4; display: flex; flex-direction: column; justify-content: space-between; margin: 1px 0; padding: 4px 0 1px; }
.items { display: flex; }
.caption { text-align: center; color: #444; }
.big { display: flex; flex-direction: column; align-items: center; line-height: 13px; }
.big svg { width: 32px; height: 32px; margin: 1px 0 3px; }
.big span { white-space: nowrap; }
.off { color: #888; }
.w36 { width: 36px; }
.w42 { width: 42px; }
.w48 { width: 48px; }
.w54 { width: 54px; }
.w60 { width: 60px; }
.w72 { width: 72px; }
.w84 { width: 84px; }
.rule { width: 1px; height: 56px; background: #dcdee0; }
.stack { display: flex; flex-direction: column; margin-top: -2px; }
.stack button { display: flex; align-items: center; gap: 3px; height: 22px; white-space: nowrap; }
.stack .i16 { width: 15px; height: 15px; }
.g-clip { width: 156px; }
.g-clip .stack { margin-left: -2px; }
.g-data { width: 260px; }
.g-insert { width: 264px; padding-left: 4px; }
.g-insert .items { gap: 1px; }
.g-custom { width: 122px; padding-left: 1px; }
.g-theme { width: 57px; }
.g-rel { width: 86px; }
.g-calc { width: 139px; padding-left: 7px; }
.g-share { width: 54px; padding-left: 1px; }

.workspace { flex: 1; display: flex; border-bottom: 1px solid #c8c8c8; }
.rail { width: 42px; border-right: 1px solid #ccc; display: flex; flex-direction: column; }
.rail button { height: 42px; padding-top: 2px; display: grid; place-items: center; border-left: 3px solid transparent; }
.rail .current { border-color: #f2c811; }
.center { flex: 1; min-width: 0; display: flex; flex-direction: column; background: #fff; }
.report { flex: 1; display: flex; }
.canvas { flex: 1; position: relative; border: solid #b8b8b8; border-width: 1px 2px 0 1px; padding: 0 14px 0 4px; }
.canvas::after { content: ""; position: absolute; inset: auto 0 15px; border-top: 1px solid #aaa; border-bottom: 2px dotted #333; height: 3px; }
.canvas h2 { font: 12px/14px Roboto, sans-serif; color: #333; padding-bottom: 3px; }
.kpi { width: 100%; table-layout: fixed; border-collapse: collapse; font-size: 13px; line-height: 18px; text-align: center; color: #222; }
.c1 { width: 10.9%; } .c2 { width: 8.8%; } .c3 { width: 13.2%; } .c4 { width: 15.3%; } .c5 { width: 15.5%; }
.kpi th, .kpi td { padding: 0; border: 1px solid #e2e2e2; }
.kpi th { height: 41px; background: #5b525a; color: #fff; font-size: 11px; font-weight: 700; }
.kpi td { height: 41px; }
.kpi td:nth-child(2) { padding: 0 8px; }
.kpi td.status { text-align: left; padding-left: 70px; }
.trend svg { width: 100%; height: 40px; }
.trend path { fill: none; stroke-width: 3px; }
.orange { stroke: #f5855a; }
.green { stroke: #5bad94; }
.highlight { position: absolute; left: 34.3%; top: 18px; width: 106px; height: 211px; border: 1px solid #d25f64; }
.visualbar { position: absolute; right: 0; top: 3px; display: flex; gap: 4px; }
.visualbar button { width: 24px; height: 20px; background: #fff; display: grid; place-items: center; }
.handle { position: absolute; width: 9px; height: 9px; border: 0 solid #999; z-index: 1; }
.nw { left: -1px; top: 0; border-width: 3px 0 0 3px; }
.ne { right: -2px; top: 0; border-width: 3px 3px 0 0; }
.sw { left: -1px; bottom: 17px; border-width: 0 0 3px 3px; }
.se { right: -2px; bottom: 17px; border-width: 0 3px 3px 0; }
.n { left: 50%; top: 0; width: 12px; height: 3px; border-top-width: 3px; margin-left: -6px; }
.s { left: 50%; bottom: 17px; width: 12px; height: 3px; border-bottom-width: 3px; margin-left: -6px; }
.w { left: -1px; top: 255px; height: 12px; border-left-width: 3px; }
.e { right: -2px; top: 255px; height: 12px; border-right-width: 3px; }
.filters { width: 32px; display: flex; flex-direction: column; align-items: center; padding-top: 14px; }
.funnel { margin: 32px 0 10px; }
.filters h2 { writing-mode: vertical-rl; font-size: 14px; line-height: 20px; font-weight: 600; }
.pages { height: 35px; background: #eaeaea; display: flex; color: #555; font-weight: 600; }
.pages button { padding: 0 21px; border-right: 1px solid #c8c8c8; white-space: nowrap; }
.arrows { width: 40px; display: flex; align-items: center; justify-content: space-between; padding: 0 3px; border-right: 1px solid #aaa; }
.pages .current { background: #fff; border-bottom: 3px solid #f2c811; padding: 3px 20px 0; }
.pages .add { width: 40px; padding: 3px 0 0 14px; background: #f2c811; border: 0; }

.pane { border-left: 1px solid #d8d8d8; }
.pane header { display: flex; align-items: center; justify-content: space-between; height: 49px; padding: 0 10px 0 12px; }
.pane header h2 { font-size: 15px; font-weight: 600; color: #444; }
.viz { width: 181px; display: flex; flex-direction: column; }
.gallery { display: grid; grid-template-columns: repeat(6, 28px); grid-auto-rows: 24px; place-items: center; padding: 1px 0 9px 4px; border-bottom: 1px dashed #ccc; }
.gallery > svg { width: 16px; height: 16px; }
.gallery > .large { width: 20px; height: 20px; }
.gallery > .huge { width: 22px; height: 22px; }
.gallery text { font: 700 5px "Open Sans", sans-serif; fill: #111; }
.custom { padding: 3px 0 5px 4px; border-bottom: 1px solid #d8d8d8; }
.ax { fill: none; stroke: #888; }
.letter { font-size: 14px; color: #6f9bd2; }
.r { font-size: 18px; }
.modes { display: flex; padding-left: 12px; height: 39px; }
.modes button { width: 40px; height: 36px; padding-top: 2px; display: grid; place-items: center; border-bottom: 3px solid transparent; }
.modes .current { border-color: #f2c811; }
.search { display: flex; align-items: center; height: 30px; margin: 0 4px; padding: 0 11px; gap: 8px; background: #fff; border: 1px solid #c8c6c4; border-radius: 2px; }
input, select { font: inherit; color: #333; background: #fff; border: 0; outline: 0; min-width: 0; width: 100%; }
.search input { padding: 0; font-size: 12px; }
.search input::placeholder { color: #333; opacity: 1; }
.properties { flex: 1; position: relative; margin-top: 5px; border-top: 1px solid #d8d8d8; padding: 0 18px 0 17px; display: flex; flex-direction: column; align-items: flex-start; }
.cut { width: 100%; height: 3px; background: #fff; border: 1px solid #c8c6c4; border-top: 0; }
.label { line-height: 16px; margin: 10px 0 5px 7px; }
.inset { margin: 12px 0 3px 14px; }
.swatch { width: 43px; height: 24px; display: flex; align-items: center; gap: 8px; padding-left: 4px; background: #fff; border: 1px solid #c8c6c4; border-radius: 2px; }
.swatch i { width: 13px; height: 13px; border: 1px solid #222; }
.swatch b { border-width: 4px 4px 0; }
.teal { background: #01b8aa; }
.gold { background: #f2c811; }
.choice { width: 100%; position: relative; }
.choice select, .value { display: block; height: 24px; border: 1px solid #c8c6c4; border-radius: 2px; appearance: none; padding: 0 4px; }
.value { padding: 0 7px; }
.choice svg { position: absolute; right: 7px; top: 7px; width: 10px; height: 10px; opacity: .7; }
.thumb { position: absolute; right: 0; top: 43px; width: 6px; height: 21px; border-radius: 3px; background: #c8c6c4; }
.fields { width: 181px; }
.fields header { height: 52px; padding-bottom: 3px; }
.fields ul { border-top: 1px solid #dedede; margin-top: 4px; padding-top: 8px; font-size: 11px; }
.fields li { position: relative; display: flex; align-items: center; height: 27px; padding-left: 4px; }
.sheet { width: 14px; height: 13px; margin: 0 11px 0 7px; }
.picked { font-weight: 600; }
.tick { position: absolute; left: 30px; top: 15px; width: 12px; height: 12px; }

.statusline { height: 21px; padding-left: 5px; line-height: 22px; color: #444; }
.taskbar { height: 32px; display: flex; color: #111; background: linear-gradient(90deg, #eed4dd 0%, #eed4dd 25%, #efd8d5 42%, #efd2cc 58%, #edcfcf 68%, #e2cfd0 73%, #c8dfe2 78%, #cceaef 88%, #c5eaf0 100%); }
.system, .apps, .tray { display: flex; }
.system button { width: 36px; }
.apps { margin-left: 2px; }
.apps button { width: 29px; margin: 0 4px; border-bottom: 3px solid transparent; }
.taskbar button { display: grid; place-items: center; }
.taskbar button svg { width: 16px; height: 16px; }
.apps button.open { border-bottom-color: #858084; }
.apps button.active { width: 37px; margin: 0; background: #f8e9e9; }
.tray { margin-left: auto; align-items: center; gap: 16px; padding-right: 25px; }
.lang, time { text-align: center; line-height: 16px; }
time { margin-right: 4px; }
```
